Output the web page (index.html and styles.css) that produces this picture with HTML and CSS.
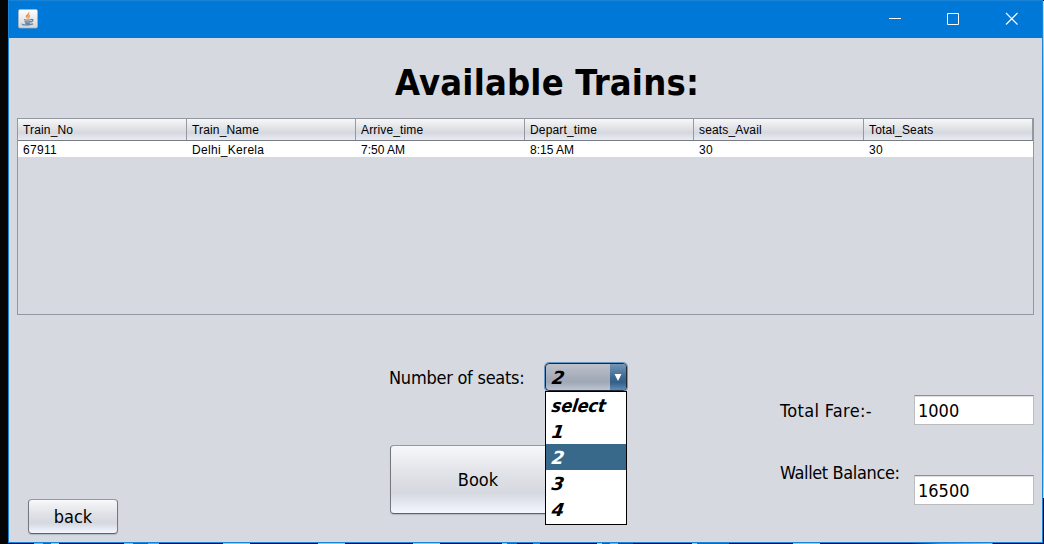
FILE: index.html
```html
<!DOCTYPE html>
<html lang="en">
<head>
<meta charset="utf-8">
<title>Available Trains</title>
<link rel="stylesheet" href="styles.css">
</head>
<body>
<div class="desktop">
<main class="window">
  <header class="titlebar">
    <svg class="app-icon" width="20" height="20" viewBox="0 0 20 20">
      <defs><linearGradient id="tile" x1="0" y1="0" x2="0" y2="1"><stop offset="0" stop-color="#fff"/><stop offset="1" stop-color="#d4d5d7"/></linearGradient></defs>
      <rect x=".5" y=".5" width="19" height="18.500" rx="1.500" fill="url(#tile)" stroke="#a9b4bd" stroke-width=".7"/>
      <path d="M10.800 3.200c.5 2-3.600 2.700-2.700 4.500.2.700.9 1.100 1.300 2-.1-1.500-.6-1.800.3-2.800.8-.9 2-1.900 1.100-3.700M11.900 6.100c-1.800.8-2.200 1.700-1.300 2.500.4.500.2.900-.2 1.300 2.100-1.200.4-2.100 1.500-3.800" fill="#e48b45" stroke="#e48b45" stroke-width=".4"/>
      <path d="M6 10.500c2 .6 5.200.6 7.300 0M6.500 12.300c1.800.7 4.500.7 6.300 0M7 14c1.600.6 3.800.6 5.200 0M13.300 10.500c2.300-.4 2 1.900-.5 2.500M4.300 14.700c-1.200 1.300 5.900 2 10.800.2" fill="none" stroke="#6485a2" stroke-width="1.300"/>
    </svg>
    <svg class="controls" width="159" height="20" viewBox="0 0 159 20" fill="none" stroke="#fff">
      <path d="M6 9.500h12M64.500 4.500h11v11h-11z"/><path d="M123 4l11.500 11.500M134.500 4L123 15.500" stroke-width="1.100"/>
    </svg>
  </header>
  <h1 class="heading">Available Trains:</h1>
  <section class="table">
    <div class="row head"><span>Train_No</span><span>Train_Name</span><span>Arrive_time</span><span>Depart_time</span><span>seats_Avail</span><span>Total_Seats</span></div>
    <div class="row data"><span class="loose">67911</span><span class="loose">Delhi_Kerela</span><span>7:50 AM</span><span>8:15 AM</span><span class="loose">30</span><span class="loose">30</span></div>
  </section>
  <section class="form">
    <div class="left"><button class="button back">back</button></div>
    <div class="center">
      <div class="seats">
        <span class="label seats-label">Number of seats:</span>
        <div class="combo">
          <span class="value"><b>2</b></span>
          <span class="arrow"><svg width="8" height="7" viewBox="0 0 8 7"><path d="M.5 0h7L4 7z" fill="#fff"/></svg></span>
          <ul class="menu"><li class="word"><b>select</b></li><li><b>1</b></li><li class="selected"><b>2</b></li><li><b>3</b></li><li><b>4</b></li></ul>
        </div>
      </div>
      <button class="button book">Book</button>
    </div>
    <div class="right">
      <div class="field fare"><span class="label fare-label">Total Fare:-</span><span class="input">1000</span></div>
      <div class="field wallet"><span class="label wallet-label">Wallet Balance:</span><span class="input">16500</span></div>
    </div>
  </section>
</main>
</div>
</body>
</html>
```
FILE: styles.css
```css
* { box-sizing: border-box; }
body { margin: 0; overflow: hidden; }
.desktop {
  width: 1044px; height: 544px; padding-left: 8px;
  background:
    linear-gradient(#c5dff2, #7dbcec 20%, #86c3f0 90%, #b5d5ec) 1043px 1px / 1px 497px no-repeat,
    linear-gradient(90deg, transparent 34px, #b5aa72 34px 43px, #455465 43px 51px, #b9c4cc 51px 59px, transparent 59px 124px, #a9b4be 124px 133px, #0865ad 133px 148px, #8d9aa3 148px 159px, transparent 159px 223px, #b9c2ca 223px 250px, transparent 250px 318px, #b9c2ca 318px 345px, transparent 345px 413px, #b9c2ca 413px 440px, transparent 440px 502px, #b9c2ca 502px 507px, #1768a8 507px 517px, transparent 517px 533px, #b76825 533px 540px, transparent 540px 597px, #b9c2ca 597px 602px, #155da0 602px 610px, #aaa57b 610px 618px, #243c54 618px 633px, transparent 633px 692px, #b9c2ca 692px 697px, #1768a8 697px 729px, transparent 729px 793px, #b9c2ca 793px 820px, transparent 820px 910px, #8d7b69 940px, #b4b5b2 992px, transparent 993px) 0 543px / 1044px 1px no-repeat,
    #050505;
}
.window {
  width: 1035px; height: 543px; border: 1px solid #1883d7;
  background: #d6d9e0; color: #000;
  font-family: "DejaVu Sans Condensed", "DejaVu Sans", sans-serif;
  font-stretch: condensed; font-size: 18px;
}
.titlebar { height: 37px; background: #0078d7; display: flex; justify-content: space-between; padding: 8px 0 0 9px; }
.heading { margin: 0; padding: 20px 0 0 386px; height: 80px; font-size: 36px; line-height: 50px; letter-spacing: .2px; white-space: nowrap; }
.table { width: 1017px; height: 197px; margin-left: 8px; border: 1px solid #9297a1; font: 12px/18px "Liberation Sans", Arial, sans-serif; }
.row { display: grid; grid-template-columns: repeat(4, 169px) 170px 1fr; white-space: nowrap; }
.row span { padding-left: 5px; }
.head { height: 22px; line-height: 23px; background: linear-gradient(#f6f7f8, #e1e2e6 45%, #d5d8df 65%, #e9ecf3); border-bottom: 1px solid #777b84; }
.head span { height: 21px; border-right: 1px solid #9599a2; letter-spacing: .15px; }
.data { height: 16px; background: #fff; }
.data .loose { letter-spacing: .3px; }
.form { display: grid; grid-template-columns: 380px 391px 1fr; height: 227px; }
.left { padding: 184px 0 0 19px; }
.center { padding-top: 48px; }
.seats { display: flex; height: 28px; line-height: 29px; }
.label { white-space: nowrap; }
.seats-label { width: 156px; letter-spacing: -.25px; }
.button {
  display: block; padding: 0; border: 1px solid #74777d; border-top-color: #95989f; border-bottom-color: #5e6268; border-radius: 4px;
  background: linear-gradient(#f7f8fa, #e1e3e8 40%, #d5d8df 70%, #f4f7ff);
  box-shadow: 0 1px 1px #b5b9c1; font: inherit; color: #000;
}
.back { width: 90px; height: 35px; }
.book { width: 176px; height: 69px; margin: 54px 0 0 1px; }
.combo { position: relative; display: flex; width: 82px; height: 28px; border: 1px solid #252a32; border-radius: 4px; background: linear-gradient(#bdc1ca, #a4abb8 55%, #a1a8b5 70%, #bdc4d2); box-shadow: 0 0 0 1px #6798c5; font-family: "DejaVu Sans", sans-serif; font-stretch: normal; font-style: italic; }
.combo b { display: inline-block; transform: skewX(-8deg); }
.value { width: 64px; padding-left: 6px; line-height: 28px; }
.arrow { flex: 1; display: flex; align-items: center; justify-content: center; background: linear-gradient(#7396b5, #3e6a92 50%, #335f88 70%, #5c8db9); border-radius: 0 3px 3px 0; }
.menu { position: absolute; left: -1px; top: 27px; width: 82px; height: 134px; margin: 0; padding: 0; list-style: none; border: 1px solid #000; background: #fff; line-height: 27px; }
.menu li { height: 26px; padding-left: 6px; }
.menu .word { font-family: "DejaVu Sans Condensed", "DejaVu Sans", sans-serif; font-stretch: condensed; letter-spacing: -.1px; }
.menu .selected { background: #39698a; color: #fff; }
.right { padding-top: 80px; }
.field { display: flex; }
.fare-label, .wallet-label { width: 134px; }
.fare-label { line-height: 31px; letter-spacing: .35px; }
.wallet { margin-top: 35px; }
.wallet-label { line-height: 23px; letter-spacing: -.38px; }
.input { width: 120px; height: 30px; padding-left: 3px; line-height: 29px; background: #fff; border: 1px solid #babcc0; border-top-color: #8d9095; box-shadow: inset 0 1px #dfe0e2; }
.wallet .input { margin-top: 15px; margin-top: 14px; }
```
